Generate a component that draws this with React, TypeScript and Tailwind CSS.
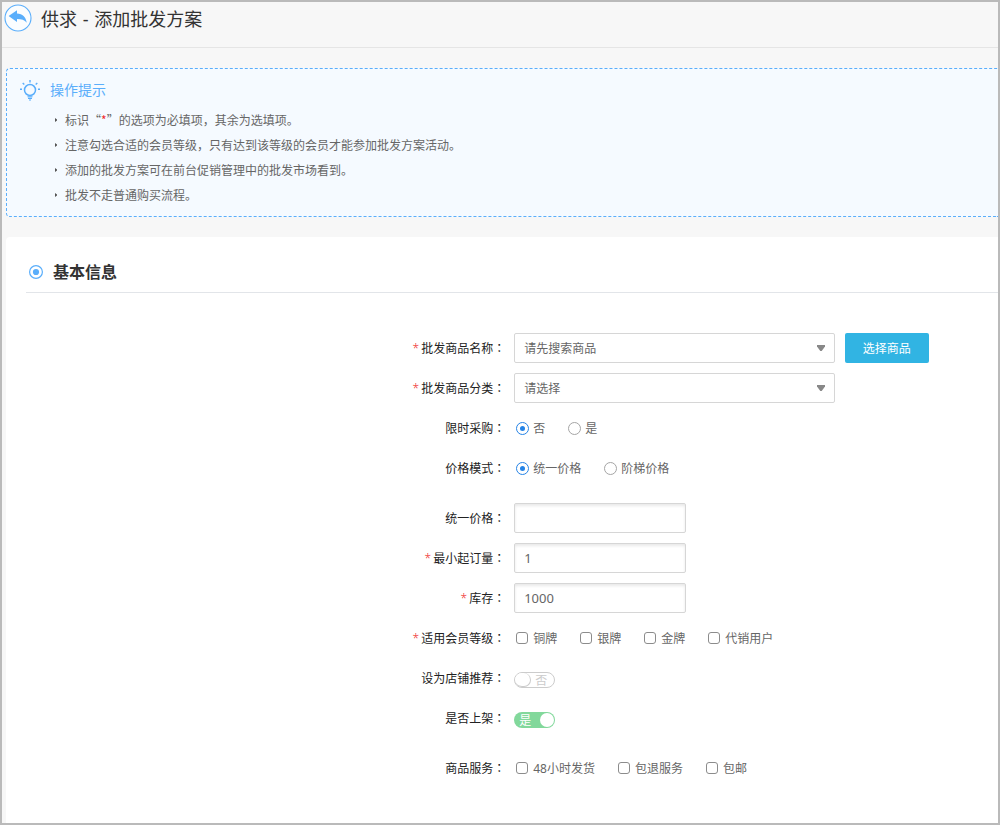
import { useState } from 'react';
import type { ReactNode } from 'react';

const TIPS: ReactNode[] = [
  <>标识“<span className="text-[#f02b2b]">*</span>”的选项为必填项，其余为选填项。</>,
  '注意勾选合适的会员等级，只有达到该等级的会员才能参加批发方案活动。',
  '添加的批发方案可在前台促销管理中的批发市场看到。',
  '批发不走普通购买流程。',
];

function BackIcon() {
  return (
    <svg width="28" height="28" viewBox="0 0 28 28" aria-hidden="true">
      <circle cx="14" cy="14" r="13" fill="#fbfdff" stroke="#5aaefb" strokeWidth="1.1" />
      <path
        d="M4.600 11.900 13 6.200v3.200c5.600.2 8.700 3.300 9.800 9.300-2.200-2.700-5.200-3.700-9.800-3.700v2.900z"
        fill="#5aaefb"
      />
    </svg>
  );
}

function BulbIcon() {
  return (
    <svg width="20" height="22" viewBox="0 0 20 22" fill="none" stroke="#5aaefb" aria-hidden="true">
      <circle cx="10" cy="11" r="5.5" strokeWidth="1.5" />
      <path d="M7.500 17.800h5M8 19.400h4M9 21h2" strokeWidth="1.100" />
      <path d="M10 1v2.500M0 10.300h2M18 10.300h2M2.700 4l1.600 1.500M17.300 4l-1.600 1.500" strokeWidth="1.400" />
    </svg>
  );
}

function Row({
  label,
  htmlFor,
  id,
  required = false,
  children,
}: {
  label: string;
  htmlFor?: string;
  id?: string;
  required?: boolean;
  children: ReactNode;
}) {
  const content = (
    <>
      {required && <span className="mr-0.5 font-light text-[#f02b2b]">*</span>}
      {label}
      <span className="font-['Noto_Sans_CJK_TC',sans-serif]" lang="zh-TW">：</span>
    </>
  );
  const cls = 'w-[49.3%] shrink-0 text-right text-[#222]';
  return (
    <div className="flex min-h-[30px] items-center gap-[9px]">
      {htmlFor ? (
        <label htmlFor={htmlFor} className={cls}>{content}</label>
      ) : (
        <div id={id} className={cls}>{content}</div>
      )}
      {children}
    </div>
  );
}

function SelectBox({ id, text }: { id: string; text: string }) {
  return (
    <div className="relative w-[321px]">
      <select
        id={id}
        className="block h-[30px] w-full appearance-none rounded-xs border border-[#d6d6d6] bg-white pt-0.5 pr-6 pl-[9px] text-[#666]"
      >
        <option>{text}</option>
      </select>
      <svg
        className="pointer-events-none absolute top-3 right-[9px]"
        width="9"
        height="6"
        viewBox="0 0 9 6"
        aria-hidden="true"
      >
        <path d="M0 0h8v1.500L4.700 6H3.300L0 1.500z" fill="#888" />
      </svg>
    </div>
  );
}

function Radios({
  name,
  labelledBy,
  options,
}: {
  name: string;
  labelledBy: string;
  options: string[];
}) {
  return (
    <div role="radiogroup" aria-labelledby={labelledBy} className="ml-0.5 flex gap-[23px]">
      {options.map((o, i) => (
        <label key={o} className="flex items-center gap-1">
          <input
            type="radio"
            name={name}
            defaultChecked={i === 0}
            className="grid size-[13px] shrink-0 appearance-none place-items-center rounded-full border border-[#a5a5a5] bg-white before:size-[5px] before:rounded-full checked:border-[#2583e6] checked:before:bg-[#2583e6]"
          />
          <span className="pt-0.5">{o}</span>
        </label>
      ))}
    </div>
  );
}

function Checks({ labelledBy, options }: { labelledBy: string; options: string[] }) {
  return (
    <div role="group" aria-labelledby={labelledBy} className="ml-0.5 flex gap-[23px]">
      {options.map((o) => (
        <label key={o} className="flex items-center gap-[5px]">
          <input
            type="checkbox"
            className="size-3 shrink-0 appearance-none rounded-[3px] border border-[#8c8c8c] bg-white checked:border-[#2583e6] checked:bg-[#2583e6]"
          />
          <span className="pt-0.5">{o}</span>
        </label>
      ))}
    </div>
  );
}

function Toggle({ labelledBy, initial }: { labelledBy: string; initial: boolean }) {
  const [on, setOn] = useState(initial);
  return (
    <button
      type="button"
      role="switch"
      aria-checked={on}
      aria-labelledby={labelledBy}
      onClick={() => setOn(!on)}
      className={
        on
          ? 'mt-1 flex h-4 w-[41px] items-center justify-between rounded-full bg-[#82d89b] pr-px pl-[5px] leading-4 text-white'
          : 'mt-1 flex h-4 w-[41px] flex-row-reverse items-center justify-between rounded-full border border-[#ccc] bg-white pr-[7px] leading-[14px] text-[#ccc]'
      }
    >
      <span className="pt-px">{on ? '是' : '否'}</span>
      <span
        className={
          on
            ? 'size-[14px] rounded-full bg-white'
            : 'h-[14px] w-4 rounded-full border-r border-b border-[#ccc] bg-white'
        }
      />
    </button>
  );
}

function NumberInput({ id, value = '' }: { id: string; value?: string }) {
  return (
    <input
      id={id}
      type="text"
      defaultValue={value}
      className="h-[30px] w-[172px] rounded-xs border border-[#d6d6d6] bg-white px-[9px] text-[13px] text-[#666] shadow-[inset_0_2px_3px_rgba(0,0,0,0.09)]"
    />
  );
}

export default function App() {
  return (
    <div
      lang="zh-CN"
      className="flex min-h-screen flex-col border-2 border-[#bababa] bg-[#f7f7f7] font-['Noto_Sans','Noto_Sans_CJK_SC',sans-serif] text-xs text-[#666]"
    >
      <header className="flex h-[46px] items-start gap-[9px] border-b border-[#e5e5e5] pt-0.5 pl-0.5">
        <a href="#back" aria-label="返回">
          <BackIcon />
        </a>
        <h1 className="pt-px text-lg leading-7 text-[#333]">
          供求<span className="mx-px"> - </span>添加批发方案
        </h1>
      </header>

      <main className="flex grow flex-col gap-5 pt-5 pl-1">
        <section className="rounded-l border border-r-0 border-dashed border-[#5aaefb] bg-[#f5faff] pt-[10px] pb-[9px] pl-[13px]">
          <h2 className="flex items-center gap-[10px] text-sm leading-[22px] text-[#5aaefb]">
            <BulbIcon />
            操作提示
          </h2>
          <ul className="mt-1.5 ml-[35px] font-['Noto_Sans_CJK_SC',sans-serif] leading-[25px]">
            {TIPS.map((tip, i) => (
              <li key={i} className="flex items-center gap-2">
                <svg width="2" height="4" viewBox="0 0 2 4" aria-hidden="true">
                  <path d="M0 0 2 1.500v1L0 4z" fill="#555" />
                </svg>
                <span>{tip}</span>
              </li>
            ))}
          </ul>
        </section>

        <section className="grow rounded-tl bg-white pt-5 pb-10 pl-5">
          <h2 className="flex h-9 items-center gap-[10px] border-b border-[#e2e5e9] pb-1.5 pl-[3px] text-base font-bold text-[#333]">
            <svg width="14" height="14" viewBox="0 0 14 14" aria-hidden="true">
              <circle cx="7" cy="7" r="6.400" fill="none" stroke="#5aaefb" strokeWidth="1.200" />
              <circle cx="7" cy="7" r="3.100" fill="#5aaefb" />
            </svg>
            基本信息
          </h2>

          <form className="mt-10 flex flex-col gap-5" onSubmit={(e) => e.preventDefault()}>
            <div className="flex flex-col gap-[10px]">
              <Row label="批发商品名称" htmlFor="goods" required>
                <SelectBox id="goods" text="请先搜索商品" />
                <button
                  type="button"
                  className="ml-px h-[30px] w-[84px] rounded-xs bg-[#31b4e3] pt-0.5 pr-px text-white"
                >
                  选择商品
                </button>
              </Row>
              <Row label="批发商品分类" htmlFor="category" required>
                <SelectBox id="category" text="请选择" />
              </Row>
              <Row label="限时采购" id="limit">
                <Radios name="limit" labelledBy="limit" options={['否', '是']} />
              </Row>
              <Row label="价格模式" id="mode">
                <Radios name="mode" labelledBy="mode" options={['统一价格', '阶梯价格']} />
              </Row>
            </div>
            <div className="flex flex-col gap-[10px]">
              <Row label="统一价格" htmlFor="price">
                <NumberInput id="price" />
              </Row>
              <Row label="最小起订量" htmlFor="min" required>
                <NumberInput id="min" value="1" />
              </Row>
              <Row label="库存" htmlFor="stock" required>
                <NumberInput id="stock" value="1000" />
              </Row>
              <Row label="适用会员等级" id="level" required>
                <Checks labelledBy="level" options={['铜牌', '银牌', '金牌', '代销用户']} />
              </Row>
              <Row label="设为店铺推荐" id="recommend">
                <Toggle labelledBy="recommend" initial={false} />
              </Row>
              <Row label="是否上架" id="shelf">
                <Toggle labelledBy="shelf" initial />
              </Row>
            </div>
            <Row label="商品服务" id="service">
              <Checks labelledBy="service" options={['48小时发货', '包退服务', '包邮']} />
            </Row>
          </form>
        </section>
      </main>
    </div>
  );
}
